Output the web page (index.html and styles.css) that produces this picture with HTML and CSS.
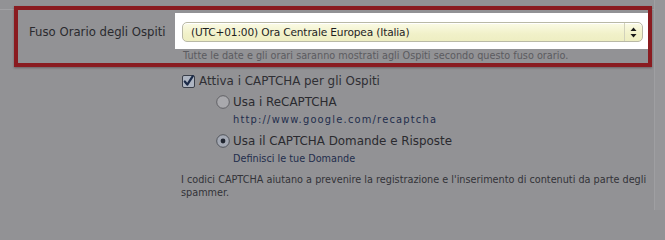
FILE: index.html
```html
<!DOCTYPE html>
<html lang="it">
<head>
<meta charset="utf-8">
<title>Impostazioni Ospiti</title>
<link rel="stylesheet" href="styles.css">
</head>
<body>
<div class="page">
<div class="frame">
  <div class="highlight">
    <div class="label">Fuso Orario degli Ospiti</div>
    <div class="field">
      <div class="whitebox">
        <div class="select">
          <span class="select-text">(UTC+01:00) Ora Centrale Europea (Italia)</span>
          <span class="select-arrows">
            <svg width="7" height="11" viewBox="0 0 7 11"><path d="M3.5 0.5 L6.5 4 L0.5 4 Z M3.5 10.5 L6.5 7 L0.5 7 Z" fill="#1a1a1a"/></svg>
          </span>
        </div>
      </div>
      <div class="hint">Tutte le date e gli orari saranno mostrati agli Ospiti secondo questo fuso orario.</div>
    </div>
  </div>
  <div class="options">
    <div class="row check-row">
      <svg class="checkbox" width="13" height="13" viewBox="0 0 13 13">
        <rect x="0.5" y="0.5" width="12" height="12" rx="1.5" fill="#aeb5c2" stroke="#3a3f4a"/>
        <path d="M2.8 6.5 L5.3 9.6 L10.8 1.2" fill="none" stroke="#1b2a48" stroke-width="2.2" stroke-linecap="round" stroke-linejoin="round"/>
      </svg>
      <span>Attiva i CAPTCHA per gli Ospiti</span>
    </div>
    <div class="sub">
      <div class="row radio-row">
        <svg class="radio" width="14" height="14" viewBox="0 0 14 14">
          <circle cx="7" cy="7" r="6.3" fill="#a9a9ad" stroke="#5a5a5f" stroke-width="0.9"/>
        </svg>
        <span>Usa i ReCAPTCHA</span>
      </div>
      <div class="link url">http://www.google.com/recaptcha</div>
      <div class="row radio-row second">
        <svg class="radio" width="14" height="14" viewBox="0 0 14 14">
          <circle cx="7" cy="7" r="6.3" fill="#a4a9b4" stroke="#4a4d55" stroke-width="0.9"/>
          <circle cx="7" cy="7" r="2.4" fill="#202530"/>
        </svg>
        <span>Usa il CAPTCHA Domande e Risposte</span>
      </div>
      <div class="link">Definisci le tue Domande</div>
    </div>
    <p class="note">I codici CAPTCHA aiutano a prevenire la registrazione e l'inserimento di contenuti da parte degli spammer.</p>
  </div>
</div>
</div>
</body>
</html>
```
FILE: styles.css
```css
html {
  background: #929295;
}
html, body {
  margin: 0;
  padding: 0;
}
body {
  width: 665px;
  height: 210px;
  overflow: hidden;
  background: #969699;
  font-family: "DejaVu Sans", Verdana, sans-serif;
  color: #2f2f34;
}
.page {
  width: 655px;
  height: 210px;
  box-sizing: border-box;
  border-right: 1px solid #9f9fa2;
  background: #929295;
}
.frame {
  padding-top: 9px;
}
.frame::before {
  content: "";
  display: block;
  height: 1px;
  background: #a1a1a4;
}
.highlight {
  margin: -4px 3px 0 14px;
  border: 4px solid #8a1b20;
  height: 53px;
  display: flex;
  box-shadow: 0 1px 2px rgba(40, 0, 0, 0.35);
  width: 630px;
}
.label {
  width: 157px;
  box-sizing: border-box;
  padding: 12px 0 0 11px;
  line-height: 20px;
  font-size: 11.7px;
  color: #2a2a2f;
}
.field {
  flex: 1;
  min-width: 0;
}
.whitebox {
  margin-top: 3px;
  background: #ffffff;
  padding: 9px 5px 7px 7px;
}
.select {
  height: 20px;
  box-sizing: border-box;
  border: 1px solid #b9b9a6;
  border-radius: 5px;
  background: linear-gradient(#fbfbe6, #f1f1c9 60%, #eeeec2);
  display: flex;
  align-items: center;
  box-shadow: inset 0 1px 0 #ffffff;
}
.select-text {
  flex: 1;
  padding-left: 8px;
  font-size: 10.6px;
  letter-spacing: -0.15px;
  color: #1e1e1e;
  white-space: nowrap;
}
.select-arrows {
  width: 17px;
  height: 18px;
  border-left: 1px solid #d2d2bc;
  display: flex;
  align-items: center;
  justify-content: center;
}
.select-arrows svg {
  display: block;
}
.hint {
  padding-left: 8px;
  margin-top: 1px;
  font-size: 9.7px;
  line-height: 12px;
  color: #5b5b60;
  white-space: nowrap;
}
.options {
  margin-left: 182px;
  padding-top: 6px;
  font-size: 11.9px;
}
.row {
  display: flex;
  align-items: center;
  height: 16px;
  line-height: 16px;
}
.check-row .checkbox {
  margin-right: 4px;
  flex: none;
}
.sub {
  margin-left: 34px;
  margin-top: 5px;
}
.radio {
  margin-right: 3px;
  flex: none;
}
.radio-row span {
  color: #2a2a2f;
}
.link {
  margin-left: 17px;
  font-size: 9.7px;
  line-height: 14px;
  margin-top: 3px;
  color: #1f2d4c;
}
.link.url {
  font-size: 9.9px;
  letter-spacing: 1.2px;
}
.radio-row.second {
  margin-top: 6px;
}
.note {
  margin: 7px 0 0 -1px;
  width: 476px;
  font-size: 9.7px;
  line-height: 13px;
  color: #333338;
}
```
